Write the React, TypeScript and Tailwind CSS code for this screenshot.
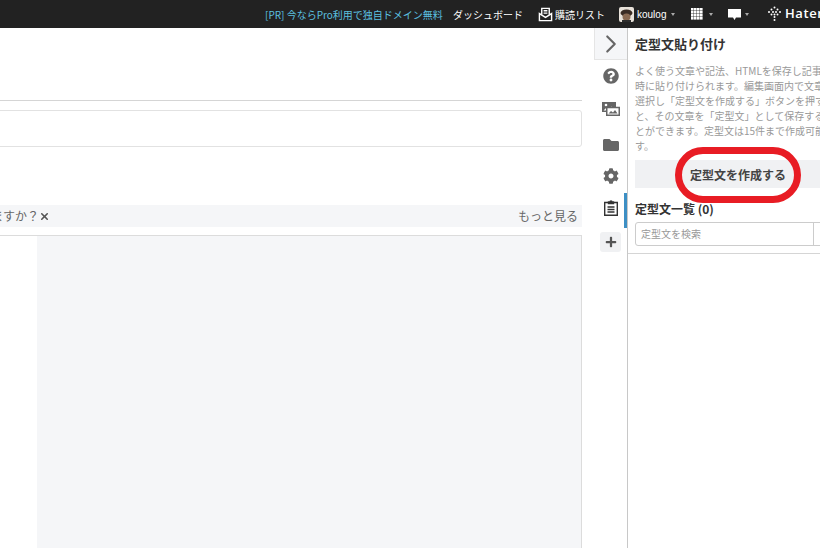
import { ChevronRight, X } from "lucide-react";
import { FaCog, FaFolder, FaPlus, FaQuestionCircle } from "react-icons/fa";

const font = "font-['Noto_Sans_CJK_JP','Noto_Sans',sans-serif]";

const Caret = ({ className }: { className: string }) => (
  <span className={`inline-block h-0 w-0 border-x-2 border-t-[3px] border-x-transparent border-t-[#aaa] ${className}`} />
);

const gridCells = [0, 3, 6, 9].flatMap((y) => [0, 3, 6, 9].map((x) => ({ x, y })));
const logoDots = [
  [7.5, 1.5], [4.5, 3.5], [10.5, 3.5], [2, 6], [6, 6], [9, 6], [13, 6],
  [4.5, 8.5], [7.5, 8.5], [10.5, 8.5], [7.5, 11], [7.5, 14],
];

const TopBar = () => (
  <header className="flex h-7 shrink-0 items-center overflow-hidden bg-[#222] pl-[265px] text-[10px] whitespace-nowrap text-white">
    <a className="w-[175px] shrink-0 text-[#5cc0e0]">[PR] 今ならPro利用で独自ドメイン無料</a>
    <a className="ml-[13px] w-[70px] shrink-0">ダッシュボード</a>
    <span className="ml-[15px] flex shrink-0 items-center">
      <svg viewBox="0 0 16 16" className="mr-[2px] h-[15px] w-[15px] fill-none stroke-white stroke-[1.5]">
        <path d="M1.500 7v7.500h13V7L8 11z" />
        <path d="M4 8V1.500h8V8M6 4h4M6 6.500h4" />
      </svg>
      <span className="w-[50px]">購読リスト</span>
    </span>
    <span className="ml-[14px] flex shrink-0 items-center">
      <svg viewBox="0 0 15 15" className="mr-[3px] h-[15px] w-[15px] rounded-[2px]">
        <rect width="15" height="15" fill="#e8e2da" />
        <ellipse cx="7.500" cy="6" rx="6" ry="3.500" fill="#3a2c24" />
        <ellipse cx="7.500" cy="10" rx="4" ry="3.500" fill="#8a6a52" />
        <rect x="3" y="13" width="9" height="2" fill="#2c2c2c" />
      </svg>
      <span className="w-[29px] font-['Liberation_Sans',sans-serif]">koulog</span>
      <Caret className="ml-[5px]" />
    </span>
    <svg viewBox="0 0 12 12" className="ml-[16px] h-3 w-3 shrink-0 fill-white">
      {gridCells.map((c) => (
        <rect key={`${c.x}-${c.y}`} x={c.x} y={c.y} width="2.600" height="2.600" />
      ))}
    </svg>
    <Caret className="ml-[6px]" />
    <svg viewBox="0 0 13 11" className="ml-[15px] h-[11px] w-[13px] shrink-0 fill-white">
      <path d="M0 0h13v8.500H8L6.500 11 5 8.500H0z" />
    </svg>
    <Caret className="ml-[4px]" />
    <svg viewBox="0 0 15 16" className="ml-[18px] h-4 w-[15px] shrink-0 fill-white">
      {logoDots.map(([x, y]) => (
        <circle key={`${x}-${y}`} cx={x} cy={y} r="1" />
      ))}
    </svg>
    <span className="ml-[3px] shrink-0 font-['Open_Sans',sans-serif] text-[13px] font-semibold tracking-[0.6px]">Hatena</span>
  </header>
);

const Editor = () => (
  <div className="min-w-0 flex-1 overflow-hidden pt-[72px] pr-3">
    <div className="h-px bg-[#d5d5d5]" />
    <div className="mt-[9px] -ml-2 h-[37px] rounded-[3px] border border-[#e2e2e2]" />
    <div className="mt-[58px] flex h-[22px] items-center justify-between bg-[#f5f6f8] text-[12px] text-[#666]">
      <span className="-ml-[9px] flex items-center">
        ますか？
        <X className="ml-0 h-[11px] w-[11px] text-[#555]" strokeWidth={3.5} />
      </span>
      <span className="pr-[4px]">もっと見る</span>
    </div>
    <div className="mt-2 h-[400px] border-t border-r border-[#dcdcdc] pl-[37px]">
      <div className="h-full bg-[#f5f6f8]" />
    </div>
  </div>
);

const ToolIcons = () => (
  <div className="flex w-[33px] shrink-0 flex-col items-center">
    <div className="flex h-8 w-[33px] items-center justify-center border-b border-l border-[#e5e5e5] bg-[#f5f6f8]">
      <ChevronRight className="h-[30px] w-[30px] text-[#666]" strokeWidth={1.7} />
    </div>
    <FaQuestionCircle className="mt-2 h-4 w-4 text-[#666]" />
    <svg viewBox="0 0 18 14" className="mt-[18px] h-[14px] w-[18px] text-[#666]">
      <path d="M0 0h14v10H0z" fill="currentColor" />
      <circle cx="4" cy="3" r="1.300" fill="#fff" />
      <path d="M1.500 8.500 5 5l2 2 2.500-2.500 3 3v1z" fill="#fff" />
      <path d="M4.750 5.500h12.500v7.750H4.750z" fill="#fff" stroke="currentColor" strokeWidth="1.500" />
      <path d="M6.500 11.500 9 9l2 1.500 2-2.500 2.500 3.500z" fill="currentColor" />
    </svg>
    <FaFolder className="mt-[21px] h-4 w-4 text-[#666]" />
    <FaCog className="mt-[15px] h-4 w-4 text-[#666]" />
    <div className="relative mt-[9px] flex h-[35px] w-[33px] items-start justify-center pt-[7px]">
      <svg viewBox="0 0 14 16" className="h-4 w-[14px] fill-none stroke-[#333] stroke-[1.400]">
        <path d="M4 2.500H.7v12.800h12.600V2.500H10" />
        <path d="M4.500 3.500V2h1.500a1 1 0 0 1 2 0h1.500v1.500z" fill="#333" />
        <path d="M3.500 7h7M3.500 9.500h7M3.500 12h7" />
      </svg>
      <span className="absolute top-0 right-0 h-[35px] w-[3px] bg-[#3d8fc4]" />
    </div>
    <div className="mt-1 flex h-5 w-[21px] items-center justify-center rounded-[3px] bg-[#f0f1f3]">
      <FaPlus className="h-3 w-3 text-[#555]" />
    </div>
  </div>
);

const Panel = () => (
  <aside className="relative w-[193px] shrink-0 overflow-hidden border-l border-[#c8c8c8]">
    <div className="w-[230px] border-b border-[#d5d5d5] pb-[7px] pl-[7px]">
      <h2 className="mt-[7px] text-[13px] leading-[18px] font-semibold text-[#333]">定型文貼り付け</h2>
      <p className="mt-[10px] w-[208px] text-[10px] leading-[15px] break-all text-[#999]">
        よく使う文章や記法、HTMLを保存し記事作成時に貼り付けられます。編集画面内で文章を選択し「定型文を作成する」ボタンを押すと、その文章を「定型文」として保存することができます。定型文は15件まで作成可能です。
      </p>
      <div className="mt-[7px] flex h-7 w-[206px] items-center justify-center bg-[#f0f1f3] pt-px text-[12px] font-semibold text-[#444]">
        定型文を作成する
      </div>
      <h3 className="mt-[13px] text-[12px] leading-4 font-semibold text-[#333]">定型文一覧 (0)</h3>
      <div className="mt-[5px] flex h-6 w-[210px] rounded-[3px] border border-[#ccc] text-[10px] text-[#999]">
        <span className="flex w-[178px] items-center border-r border-[#ccc] pb-[2px] pl-[5px]">定型文を検索</span>
      </div>
    </div>
    <span className="absolute top-[119px] left-[47px] h-[56px] w-[126px] rounded-[28px] border-[7px] border-[#e81c24]" />
  </aside>
);

export default function App() {
  return (
    <div className={`flex h-[548px] w-[820px] flex-col overflow-hidden bg-white ${font}`}>
      <TopBar />
      <main className="flex min-h-0 flex-1">
        <Editor />
        <ToolIcons />
        <Panel />
      </main>
    </div>
  );
}
